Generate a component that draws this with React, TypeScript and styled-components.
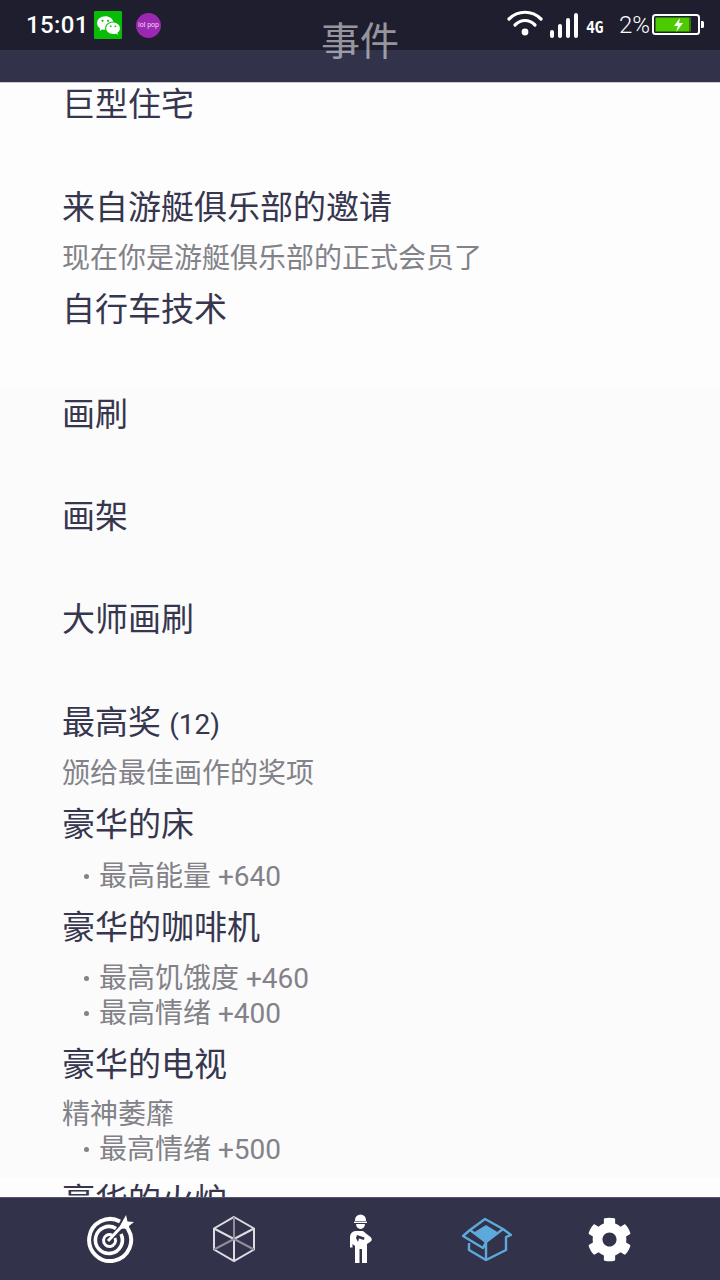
import React from "react";
import styled, { createGlobalStyle } from "styled-components";
import { FaCog } from "react-icons/fa";
import { RiWechatFill } from "react-icons/ri";

const Global = createGlobalStyle`
  html, body { margin: 0; padding: 0; background: #fcfcfd; }
  * { box-sizing: border-box; }
`;

const Page = styled.div`
  width: 720px;
  height: 1280px;
  display: flex;
  flex-direction: column;
  position: relative;
  overflow: hidden;
  background: #fcfcfd;
  font-family: Roboto, "Noto Sans CJK SC", sans-serif;
`;
const StatusBar = styled.div`
  height: 50px;
  flex: none;
  background: #1e1e2e;
  display: flex;
  align-items: center;
  justify-content: space-between;
  padding: 0 16px 0 26px;
  color: #fff;
`;
const StatusLeft = styled.div`
  display: flex;
  align-items: center;
`;
const Clock = styled.span`
  font-size: 24px;
  font-weight: 500;
  letter-spacing: 0.4px;
  width: 68px;
`;
const WeChat = styled.span`
  width: 28px;
  height: 28px;
  background: #09bb07;
  border-radius: 1px;
  display: flex;
  align-items: center;
  justify-content: center;
  color: #fff;
  margin-right: 14px;
`;
const Lollipop = styled.span`
  width: 25px;
  height: 25px;
  border-radius: 50%;
  background: #9c27b0;
  display: flex;
  align-items: center;
  justify-content: center;
  font-size: 7px;
  white-space: nowrap;
  color: #f3d9f7;
`;
const StatusRight = styled.div`
  display: flex;
  align-items: center;
`;
const NetLabel = styled.span`
  font-family: "DejaVu Sans Mono", monospace;
  font-size: 15px;
  line-height: 15px;
  font-weight: 700;
  align-self: flex-start;
  margin: 10px 0 0 8px;
  width: 33px;
  letter-spacing: -0.5px;
`;
const Percent = styled.span`
  font-size: 24px;
  font-weight: 300;
  width: 33px;
`;
const HeaderBand = styled.div`
  height: 32px;
  flex: none;
  background: #32324a;
`;
const ScreenTitle = styled.div`
  position: absolute;
  top: 13px;
  left: 0;
  right: 0;
  text-align: center;
  font-size: 39px;
  line-height: 50px;
  color: rgba(255, 255, 255, 0.55);
  font-family: "Noto Sans CJK SC", sans-serif;
`;
const List = styled.div`
  flex: 1;
  min-height: 0;
  overflow: hidden;
  padding: 5px 0 0 62px;
  border-top: 1px solid #c9c9d2;
  background: linear-gradient(
    #fdfdfd 0,
    #fdfdfd 306px,
    #fbfbfc 306px,
    #fbfbfc 1095px,
    #fdfdfd 1095px
  );
`;
const Item = styled.div<{ $gap?: number }>`
  display: flex;
  flex-direction: column;
  min-height: 102.6px;
  padding-bottom: 17px;
  margin-top: ${(p) => p.$gap ?? 0}px;
`;
const Title = styled.div<{ $tight?: boolean }>`
  font-size: 33px;
  line-height: 34px;
  height: 34px;
  margin-bottom: ${(p) => (p.$tight ? 16 : 17)}px;
  color: #36364e;
  white-space: nowrap;
`;
const Count = styled.span`
  font-size: 28px;
`;
const Note = styled.div`
  font-size: 28px;
  line-height: 34px;
  color: #828288;
  white-space: nowrap;
`;
const Effect = styled.div`
  font-size: 28px;
  line-height: 35px;
  color: #828288;
  white-space: nowrap;
  padding-left: 37px;
  position: relative;
  &::before {
    content: "";
    position: absolute;
    left: 22px;
    top: 15px;
    width: 5px;
    height: 5px;
    border-radius: 50%;
    background: #828288;
  }
`;
const NavBar = styled.nav`
  height: 83px;
  flex: none;
  background: #32324a;
  border-top: 1px solid #55556a;
  display: grid;
  grid-template-columns: 124px 123px 132px 120px 124px;
  padding-left: 48px;
  align-items: center;
  justify-items: center;
  position: relative;
`;

const Wifi = () => (
  <svg width="36" height="28" viewBox="0 0 36 28" fill="none" stroke="#fff" strokeWidth="3.2" strokeLinecap="round" style={{ marginTop: -4 }}>
    <path d="M2 10C11 1 25 1 34 10" />
    <path d="M8 16C14 10 22 10 28 16" />
    <circle cx="18" cy="23" r="3.4" fill="#fff" stroke="none" />
  </svg>
);
const Signal = () => (
  <svg width="28" height="25" viewBox="0 0 28 25" fill="#fff" style={{ marginLeft: 7, marginTop: 1 }}>
    <rect x="0" y="17" width="4" height="8" rx="2" />
    <rect x="8" y="11" width="4" height="14" rx="2" />
    <rect x="16" y="5" width="4" height="20" rx="2" />
    <rect x="24" y="0" width="4" height="25" rx="2" />
  </svg>
);
const Battery = () => (
  <svg width="52" height="22" viewBox="0 0 52 22">
    <rect x="1" y="1" width="46" height="19" rx="2.5" fill="none" stroke="#fff" strokeWidth="2" />
    <rect x="3.5" y="3.5" width="34" height="14" fill="#4ccc00" />
    <rect x="37.5" y="3.5" width="1.5" height="14" fill="#3a7a10" />
    <path d="M28 4L22 12H26L24 18L31 9H27Z" fill="#fff" />
    <path d="M49 7H50.5A1.5 1.5 0 0 1 52 8.5V12.5A1.5 1.5 0 0 1 50.5 14H49Z" fill="#fff" />
  </svg>
);
const TargetIcon = () => (
  <svg width="50" height="50" viewBox="0 0 50 50" fill="none" stroke="#fff">
    <path d="M35 7.5A21 21 0 1 0 43 15" strokeWidth="4" />
    <path d="M31 14.5A13.5 13.5 0 1 0 36 20" strokeWidth="3.6" />
    <path d="M27 21A6 6 0 1 0 30 24" strokeWidth="3" />
    <path d="M23 27L38 11" strokeWidth="3" />
    <path d="M41 1L42.5 7.5L49 8L44 12L45 18L39.5 14.5L34 15L36 10Z" fill="#fff" stroke="none" />
  </svg>
);
const CubeIcon = () => (
  <svg width="44" height="48" viewBox="0 0 44 48" fill="none" stroke="#dcdce2" strokeWidth="2">
    <path d="M22 2L42 13.5V34.5L22 46L2 34.5V13.5Z" />
    <path d="M22 24L2 13.5M22 24L42 13.5M22 24V46" />
    <path d="M22 24V2M22 24L2 34.5M22 24L42 34.5" stroke="#8e8e9e" />
  </svg>
);
const WorkerIcon = () => (
  <svg width="24" height="52" viewBox="0 0 24 52" fill="#fff">
    <path d="M6 7A5.5 5.5 0 0 1 17 7V8H6Z" />
    <rect x="5" y="8.6" width="13" height="1.4" />
    <path d="M7 11H16A4.5 5 0 0 1 7 11Z" />
    <path d="M6 18H14L17 20.5L21.5 24C23.5 26 23 28 21 29L18 31V50H13V36H10.5V50H6V33L3.5 31V34.5H1V24C1 20.5 3 18.5 6 18Z" />
    <path d="M8 22L15.5 24.5L15 27L10 25.5L9 29L7 25Z" fill="#32324a" />
  </svg>
);
const BoxIcon = () => (
  <svg width="50" height="44" viewBox="0 0 50 44" fill="none" stroke="#5ea9dc" strokeWidth="2.4" strokeLinejoin="round">
    <path d="M11 16L24 8L37 16L24 24Z" fill="#5ea9dc" stroke="none" />
    <path d="M8 13L23 2L41 12L24 25Z" />
    <path d="M41 12L49 18L44 20V33L24 43L7 33V26" />
    <path d="M8 13L1 19L21 31L24 25V43" />
    <path d="M24 25L44 20" strokeWidth="0" />
  </svg>
);

export default function App() {
  return (
    <Page>
      <Global />
      <StatusBar>
        <StatusLeft>
          <Clock>15:01</Clock>
          <WeChat>
            <RiWechatFill size={25} />
          </WeChat>
          <Lollipop>lol pop</Lollipop>
        </StatusLeft>
        <StatusRight>
          <Wifi />
          <Signal />
          <NetLabel>4G</NetLabel>
          <Percent>2%</Percent>
          <Battery />
        </StatusRight>
      </StatusBar>
      <HeaderBand />
      <ScreenTitle>事件</ScreenTitle>
      <List>
        <Item><Title>巨型住宅</Title></Item>
        <Item><Title>来自游艇俱乐部的邀请</Title><Note>现在你是游艇俱乐部的正式会员了</Note></Item>
        <Item><Title>自行车技术</Title></Item>
        <Item $gap={2}><Title>画刷</Title></Item>
        <Item><Title>画架</Title></Item>
        <Item><Title>大师画刷</Title></Item>
        <Item><Title>最高奖 <Count>(12)</Count></Title><Note>颁给最佳画作的奖项</Note></Item>
        <Item><Title>豪华的床</Title><Effect>最高能量 +640</Effect></Item>
        <Item><Title $tight>豪华的咖啡机</Title><Effect>最高饥饿度 +460</Effect><Effect>最高情绪 +400</Effect></Item>
        <Item><Title $tight>豪华的电视</Title><Note>精神萎靡</Note><Effect>最高情绪 +500</Effect></Item>
        <Item><Title>豪华的火炉</Title></Item>
      </List>
      <NavBar>
        <TargetIcon />
        <CubeIcon />
        <WorkerIcon />
        <BoxIcon />
        <FaCog size={45} color="#fff" />
      </NavBar>
    </Page>
  );
}
